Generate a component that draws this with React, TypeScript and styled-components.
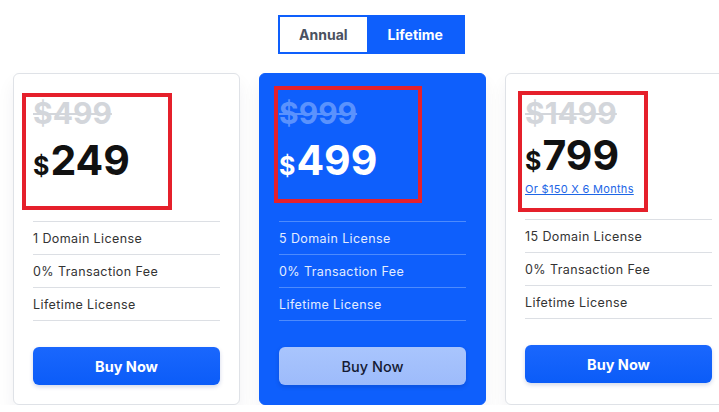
import React from "react";
import styled, { createGlobalStyle, css } from "styled-components";

const GlobalStyle = createGlobalStyle`
  html, body {
    margin: 0;
    padding: 0;
    overflow: hidden;
    background: #ffffff;
  }
  body {
    font-family: "Inter", "Liberation Sans", sans-serif;
    -webkit-font-smoothing: antialiased;
  }
  * { box-sizing: border-box; }
`;

const BLUE = "#0e5ffc";

const Page = styled.div`
  display: flex;
  flex-direction: column;
  align-items: center;
  width: 719px;
  padding: 15px 0 0;
  margin-left: 13px;
`;

const Toggle = styled.div`
  display: flex;
  height: 39px;
  border: 2px solid ${BLUE};
  background: #ffffff;
  margin-bottom: 19px;
  margin-left: -2px;
`;

const ToggleOption = styled.button<{ $active?: boolean }>`
  border: 0;
  margin: 0;
  font-family: "Inter", "Liberation Sans", sans-serif;
  font-size: 14px;
  font-weight: 700;
  cursor: pointer;
  padding: 0 19px 0 19px;
  ${({ $active }) =>
    $active
      ? css`
          background: ${BLUE};
          color: #ffffff;
          padding: 0 20px 0 21px;
        `
      : css`
          background: #ffffff;
          color: #4a5160;
        `}
`;

const CardRow = styled.div`
  display: grid;
  grid-template-columns: repeat(3, 227px);
  column-gap: 19px;
  width: 719px;
`;

const Card = styled.div<{ $featured?: boolean }>`
  position: relative;
  display: flex;
  flex-direction: column;
  height: 332px;
  padding: 21px 19px 0;
  border-radius: 6px;
  border: 1px solid ${({ $featured }) => ($featured ? BLUE : "#dfe2e7")};
  background: ${({ $featured }) => ($featured ? BLUE : "#ffffff")};
  box-shadow: 0 10px 18px rgba(20, 30, 60, 0.06);
`;

const PriceBlock = styled.div<{ $withNote?: boolean }>`
  display: flex;
  flex-direction: column;
  height: ${({ $withNote }) => ($withNote ? "124px" : "126px")};
`;

const OldPrice = styled.div<{ $featured?: boolean }>`
  font-size: 30px;
  line-height: 36px;
  font-weight: 700;
  text-decoration: line-through;
  text-decoration-thickness: 2px;
  color: ${({ $featured }) => ($featured ? "#5a92fd" : "#d3d6db")};
`;

const Price = styled.div<{ $featured?: boolean; $withNote?: boolean }>`
  display: flex;
  align-items: baseline;
  margin-top: ${({ $withNote }) => ($withNote ? "0px" : "5px")};
  font-size: 41px;
  line-height: 48px;
  font-weight: 700;
  color: ${({ $featured }) => ($featured ? "#ffffff" : "#111111")};
`;

const Currency = styled.span`
  font-size: 25px;
  margin-right: 1px;
`;

const Note = styled.a`
  font-size: 11px;
  line-height: 14px;
  letter-spacing: 0.3px;
  color: #1d66e6;
  text-decoration: underline;
  margin-top: -3px;
  cursor: pointer;
`;

const Features = styled.ul<{ $featured?: boolean }>`
  list-style: none;
  margin: 0;
  padding: 0;
  border-top: 1px solid ${({ $featured }) => ($featured ? "#4d8bfd" : "#dcdfe4")};
`;

const Feature = styled.li<{ $featured?: boolean }>`
  height: 33px;
  display: flex;
  align-items: center;
  font-size: 12.5px;
  letter-spacing: 0.4px;
  color: ${({ $featured }) => ($featured ? "#e3ecff" : "#333333")};
  border-bottom: 1px solid ${({ $featured }) => ($featured ? "#4d8bfd" : "#dcdfe4")};
`;

const BuyButton = styled.button<{ $featured?: boolean }>`
  margin-top: 26px;
  height: 38px;
  width: 100%;
  border: 0;
  border-radius: 6px;
  font-family: "Inter", "Liberation Sans", sans-serif;
  font-size: 14.5px;
  cursor: pointer;
  ${({ $featured }) =>
    $featured
      ? css`
          background: linear-gradient(180deg, #a9c5fd 0%, #9dbbfb 100%);
          color: #151a33;
          font-weight: 500;
          box-shadow: 0 2px 4px rgba(0, 20, 80, 0.18);
        `
      : css`
          background: linear-gradient(180deg, #1a67fd 0%, #0b5cf8 100%);
          color: #ffffff;
          font-weight: 700;
          box-shadow: 0 2px 4px rgba(0, 40, 140, 0.18);
        `}
`;

/* annotation frame drawn over a price area */
const Highlight = styled.div<{ $x: number; $y: number; $w: number; $h: number }>`
  position: absolute;
  left: ${({ $x }) => $x}px;
  top: ${({ $y }) => $y}px;
  width: ${({ $w }) => $w}px;
  height: ${({ $h }) => $h}px;
  border: 4px solid #e5202b;
  pointer-events: none;
`;

type Plan = {
  oldPrice: string;
  price: string;
  note?: string;
  features: string[];
  featured?: boolean;
  frame: { x: number; y: number; w: number; h: number };
};

const plans: Plan[] = [
  {
    oldPrice: "$499",
    price: "249",
    features: ["1 Domain License", "0% Transaction Fee", "Lifetime License"],
    frame: { x: 8, y: 19, w: 150, h: 117 },
  },
  {
    oldPrice: "$999",
    price: "499",
    featured: true,
    features: ["5 Domain License", "0% Transaction Fee", "Lifetime License"],
    frame: { x: 14, y: 12, w: 148, h: 117 },
  },
  {
    oldPrice: "$1499",
    price: "799",
    note: "Or $150 X 6 Months",
    features: ["15 Domain License", "0% Transaction Fee", "Lifetime License"],
    frame: { x: 12, y: 17, w: 130, h: 121 },
  },
];

function PlanCard({ plan }: { plan: Plan }) {
  const f = plan.featured;
  const withNote = Boolean(plan.note);
  return (
    <Card $featured={f}>
      <PriceBlock $withNote={withNote}>
        <OldPrice $featured={f}>{plan.oldPrice}</OldPrice>
        <Price $featured={f} $withNote={withNote}>
          <Currency>$</Currency>
          {plan.price}
        </Price>
        {plan.note && <Note>{plan.note}</Note>}
      </PriceBlock>
      <Features $featured={f}>
        {plan.features.map((item) => (
          <Feature key={item} $featured={f}>
            {item}
          </Feature>
        ))}
      </Features>
      <BuyButton $featured={f}>Buy Now</BuyButton>
      <Highlight $x={plan.frame.x} $y={plan.frame.y} $w={plan.frame.w} $h={plan.frame.h} />
    </Card>
  );
}

export default function App() {
  return (
    <>
      <GlobalStyle />
      <Page>
        <Toggle>
          <ToggleOption>Annual</ToggleOption>
          <ToggleOption $active>Lifetime</ToggleOption>
        </Toggle>
        <CardRow>
          {plans.map((p) => (
            <PlanCard key={p.price} plan={p} />
          ))}
        </CardRow>
      </Page>
    </>
  );
}
